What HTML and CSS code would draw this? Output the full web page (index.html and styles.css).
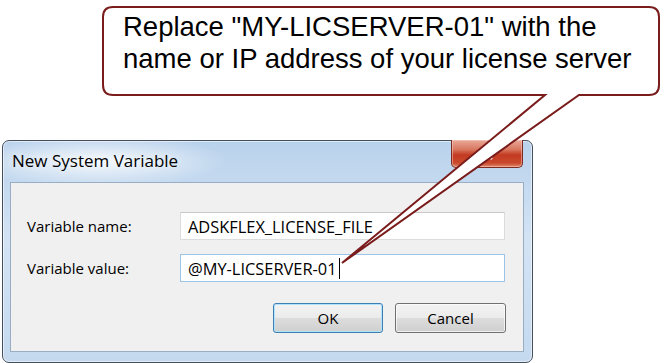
FILE: index.html
```html
<!DOCTYPE html>
<html lang="en">
<head>
	<meta charset="utf-8">
	<title>New System Variable</title>
	<link rel="stylesheet" href="styles.css">
</head>
<body>
	<div class="page">
		<!-- Dialog -->
		<div class="window">
			<div class="titlebar">
				<span class="title">New System Variable</span>
				<span class="close-btn">
					<svg width="16" height="14" viewBox="0 0 16 14"><path d="M3 2 L13 12 M13 2 L3 12" stroke="#fff" stroke-width="2.6"/></svg>
				</span>
			</div>
			<div class="client">
				<div class="row">
					<label>Variable name:</label>
					<div class="field">ADSKFLEX_LICENSE_FILE</div>
				</div>
				<div class="row">
					<label>Variable value:</label>
					<div class="field focused">@MY-LICSERVER-01<span class="caret"></span></div>
				</div>
				<div class="buttons">
					<button class="btn default">OK</button>
					<button class="btn">Cancel</button>
				</div>
			</div>
		</div>

		<!-- Callout -->
		<div class="callout">
			<svg class="callout-shape" width="667" height="363" viewBox="0 0 667 363">
				<path d="M113,7 H649 Q659,7 659,17 V85 Q659,95 649,95 H579 L342,263 L545,95 H113 Q103,95 103,85 V17 Q103,7 113,7 Z" fill="#fff" stroke="#7a1c1c" stroke-width="2"/>
			</svg>
			<p class="callout-text">Replace "MY-LICSERVER-01" with the<br>name or IP address of your license server</p>
		</div>
	</div>
</body>
</html>
```

FILE: styles.css
```css
body {
	margin: 0;
	background: #fff;
	font-family: "Open Sans", sans-serif;
}

.page {
	position: relative;
	width: 667px;
	height: 363px;
	overflow: hidden;
}

.window {
	box-sizing: border-box;
	width: 531px;
	height: 223px;
	margin: 140px 0 0 2px;
	padding: 0 8px 10px 7px;
	border: 1px solid #454f5b;
	border-radius: 7px;
	background:
		radial-gradient(ellipse 130px 26px at 95px 20px, rgba(255, 255, 255, 0.85), rgba(255, 255, 255, 0)),
		linear-gradient(to bottom, #b9d2ec, #d3e3f4 45%, #c4d9ef);
	box-shadow: inset 0 0 0 1px rgba(255, 255, 255, 0.55);
	display: flex;
	flex-direction: column;
}

.titlebar {
	height: 41px;
	display: flex;
	justify-content: space-between;
	align-items: flex-start;
}

.title {
	margin: 8px 0 0 2px;
	font-size: 17px;
	color: #000;
	text-shadow: 0 0 8px #fff;
}

.close-btn {
	box-sizing: border-box;
	width: 72px;
	height: 28px;
	margin: -1px 1px 0 0;
	border: 1px solid #7d2b20;
	border-top: none;
	border-radius: 0 0 5px 5px;
	background: linear-gradient(to bottom, #e9a99a, #d9775f 35%, #c23b22 55%, #c9482c 85%, #e08a6c);
	box-shadow: inset 0 0 0 1px rgba(255, 220, 210, 0.45);
	display: flex;
	align-items: center;
	justify-content: center;
}

.client {
	flex: 1;
	border: 1px solid #99adc5;
	background: #f0f0f0;
	padding: 29px 18px 17px 16px;
	display: flex;
	flex-direction: column;
	gap: 14px;
}

.row {
	display: flex;
	align-items: center;
}

.row label {
	width: 153px;
	font-size: 15px;
	color: #000;
}

.field {
	box-sizing: border-box;
	width: 325px;
	height: 28px;
	padding-left: 7px;
	border: 1px solid #dcdcdc;
	border-top-color: #c9c9c9;
	background: #fff;
	font-size: 16.4px;
	color: #000;
	display: flex;
	align-items: center;
}

.field.focused {
	border-color: #9cc3e8;
}

.caret {
	width: 1px;
	height: 21px;
	margin-left: 2px;
	background: #000;
}

.buttons {
	margin-top: 7px;
	margin-right: -1px;
	display: flex;
	justify-content: flex-end;
	gap: 12px;
}

.btn {
	width: 111px;
	height: 30px;
	border: 1px solid #707070;
	border-radius: 3px;
	background: linear-gradient(to bottom, #f3f3f3, #ebebeb 50%, #dddddd 50%, #cfcfcf);
	box-shadow: inset 0 0 0 1px rgba(255, 255, 255, 0.7);
	font-family: "Open Sans", sans-serif;
	font-size: 15px;
	color: #000;
	padding: 0;
}

.btn.default {
	width: 110px;
	border-color: #3c7fb1;
	box-shadow: inset 0 0 0 1px #aee3fb;
}

.callout {
	position: absolute;
	top: 0;
	left: 0;
	width: 667px;
	height: 363px;
	pointer-events: none;
}

.callout-shape {
	position: absolute;
	top: 0;
	left: 0;
}

.callout-text {
	position: relative;
	margin: 11px 0 0 123px;
	font-family: "Liberation Sans", Arial, sans-serif;
	font-size: 27.5px;
	line-height: 32px;
	color: #000;
}
```
